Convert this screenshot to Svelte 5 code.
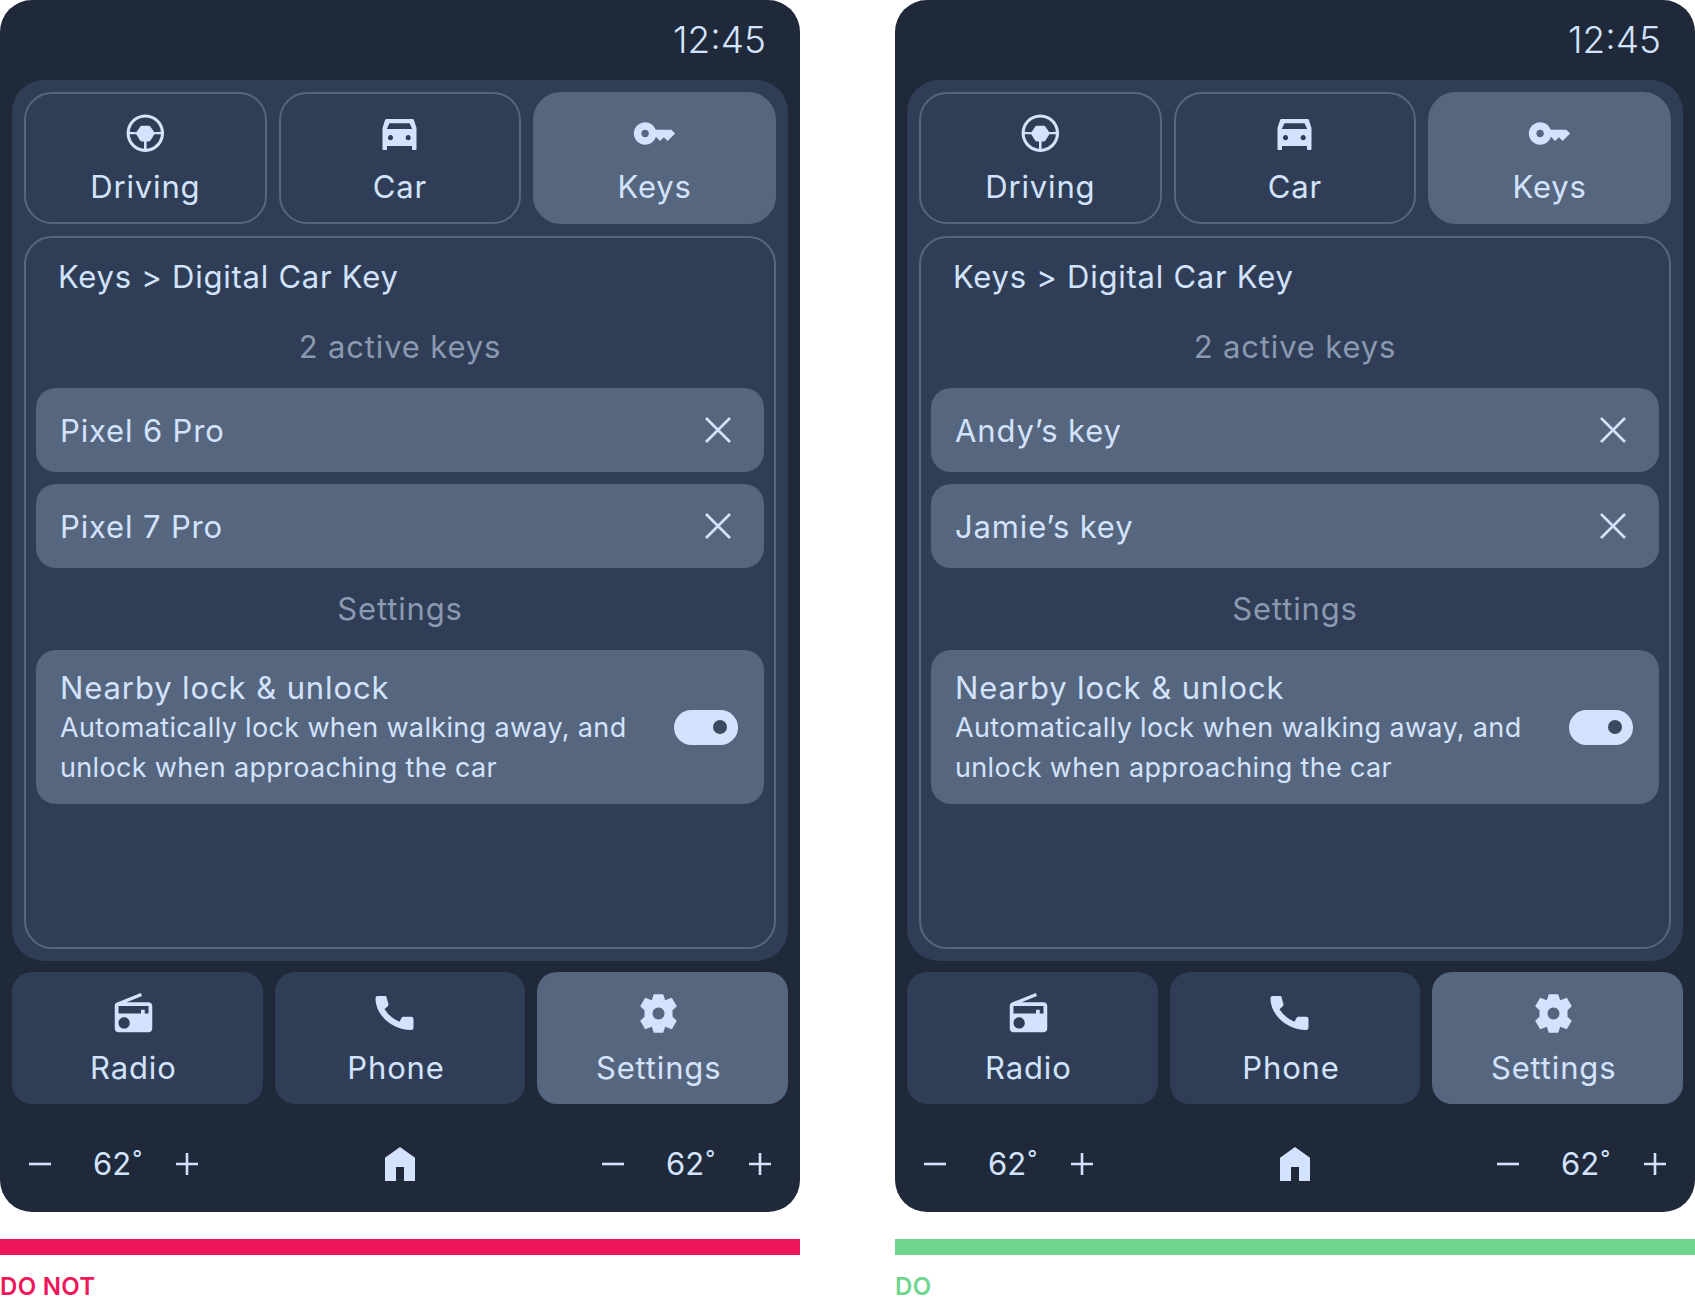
<script>
  const icons = {
    car: ['M9.5 8H35.5Q36.6 8 37 9.2L39.5 17V38Q39.5 39 38.5 39H36Q35 39 35 38V35H10V38Q10 39 9 39H6.5Q5.5 39 5.5 38V17L8 9.2Q8.4 8 9.5 8ZM12.5 12.3 9.8 18H35.2L32.5 12.3ZM13.5 24.1a2.6 2.6 0 1 0 .01 0ZM31.2 24.1a2.6 2.6 0 1 0 .01 0Z'],
    key: ['M7 14c-1.1 0-2-.9-2-2s.9-2 2-2 2 .9 2 2-.9 2-2 2zm5.65-4C11.83 7.67 9.61 6 7 6c-3.31 0-6 2.69-6 6s2.69 6 6 6c2.61 0 4.83-1.67 5.65-4H13l2 2 2-2 2 2 4-4.04L21 10h-8.35z'],
    wheel: [
      'M22.3 3.5a18.7 18.7 0 1 0 .01 0ZM22.3 6.5a15.7 15.7 0 1 1-.01 0Z',
      'M5 20.7 14.5 21.2V23.2L5 23.2ZM39.6 20.7 30.1 21.2V23.2L39.6 23.2ZM21 28H23.6V39.5H21Z',
      'M18.8 14.8H25.8Q26.8 14.8 27.5 15.7L31.4 21.5Q32 22.3 31.4 23.2L27.5 29.4Q26.8 30.4 25.8 30.4H18.8Q17.8 30.4 17.1 29.4L13.2 23.2Q12.6 22.3 13.2 21.5L17.1 15.7Q17.8 14.8 18.8 14.8Z'
    ],
    radio: ['M3.24 6.15C2.51 6.43 2 7.17 2 8v12c0 1.1.89 2 2 2h16c1.11 0 2-.9 2-2V8c0-1.11-.89-2-2-2H8.3l8.26-3.34L15.88 1 3.24 6.15zM7 20c-1.66 0-3-1.34-3-3s1.34-3 3-3 3 1.34 3 3-1.34 3-3 3zm13-8h-2v-2h-2v2H4V8h16v4z'],
    phone: ['M4.8 5H12.5Q13.3 5 13.5 6L15.5 13.5Q15.6 14.3 15 15L11.5 18.3Q17 27 26.5 30.7L28.8 26.5Q29.2 25.7 30 25.7H38.2Q40.5 25.7 40.5 28V36.7Q40.5 39 38 39C19 39 2.5 24 2.5 7.3Q2.5 5 4.8 5Z'],
    settings: ['M17.8 3.2H27.2L29.2 9.2 35.8 6.8 40.8 15.2 36.5 19.2V25.8L40.8 29.8 35.8 38.2 29.2 35.8 27.2 41.8H17.8L15.8 35.8 9.2 38.2 4.2 29.8 8.5 25.8V19.2L4.2 15.2 9.2 6.8 15.8 9.2ZM22.5 16.5a6 6 0 1 0 .01 0Z']
  };
  const tabs = [
    { label: 'Driving', icon: 'wheel', box: '0 0 45 45' },
    { label: 'Car', icon: 'car', box: '0 0 45 45' },
    { label: 'Keys', icon: 'key', box: '0 0 24 24', active: true }
  ];
  const apps = [
    { label: 'Radio', icon: 'radio', box: '0 0 24 24' },
    { label: 'Phone', icon: 'phone', box: '0 0 45 45' },
    { label: 'Settings', icon: 'settings', box: '0 0 45 45', active: true }
  ];
  const variants = [
    { keys: ['Pixel 6 Pro', 'Pixel 7 Pro'], caption: 'DO NOT', kind: 'bad' },
    { keys: ['Andy’s key', 'Jamie’s key'], caption: 'DO', kind: 'good' }
  ];
</script>

{#snippet icon(item)}
  <svg class="icon" viewBox={item.box} aria-hidden="true">
    {#each icons[item.icon] as d}<path {d} fill-rule="evenodd" />{/each}
  </svg>
{/snippet}

{#snippet climate()}
  <div class="climate">
    <svg class="sign" viewBox="0 0 22 22" aria-hidden="true"><path d="M0 11H22" /></svg>
    <span class="temp">62<sup>°</sup></span>
    <svg class="sign" viewBox="0 0 22 22" aria-hidden="true"><path d="M0 11H22M11 0V22" /></svg>
  </div>
{/snippet}

<div class="page">
  {#each variants as v}
    <section class="column">
      <div class="phone">
        <header class="status">12:45</header>
        <div class="panel">
          <nav class="tabs">
            {#each tabs as t}
              <div class="tile tab" class:active={t.active}>
                {@render icon(t)}
                <span>{t.label}</span>
              </div>
            {/each}
          </nav>
          <div class="card">
            <h1>Keys &gt; Digital Car Key</h1>
            <h2 class="first">2 active keys</h2>
            <div class="rows">
              {#each v.keys as k}
                <div class="row">
                  <span>{k}</span>
                  <svg class="close" viewBox="0 0 28 28" aria-hidden="true"><path d="M2 2 26 26M26 2 2 26" /></svg>
                </div>
              {/each}
            </div>
            <h2 class="second">Settings</h2>
            <div class="row setting">
              <div class="copy">
                <strong>Nearby lock &amp; unlock</strong>
                <p>Automatically lock when walking away, and unlock when approaching the car</p>
              </div>
              <div class="toggle"><i></i></div>
            </div>
          </div>
        </div>
        <nav class="apps">
          {#each apps as a}
            <div class="tile app" class:active={a.active}>
              {@render icon(a)}
              <span>{a.label}</span>
            </div>
          {/each}
        </nav>
        <footer class="bottom">
          {@render climate()}
          <svg class="home" viewBox="0 0 30 34" aria-hidden="true"><path d="M15 0 30 10.7V34H19V20H11V34H0V10.7Z" /></svg>
          {@render climate()}
        </footer>
      </div>
      <div class="bar {v.kind}"></div>
      <div class="caption {v.kind}">{v.caption}</div>
    </section>
  {/each}
</div>

<style>
  :global(body) { margin: 0; background: #fff; }
  .page {
    width: 1695px;
    height: 1301px;
    display: flex;
    justify-content: space-between;
    font-family: Inter, Roboto, sans-serif;
    color: #d3e3fd;
    overflow: hidden;
  }
  .column { width: 800px; }
  .phone {
    height: 1212px;
    background: #1f2939;
    border-radius: 32px;
    display: flex;
    flex-direction: column;
    padding: 0 12px;
    box-sizing: border-box;
  }
  .status {
    height: 80px;
    flex: none;
    text-align: right;
    font-size: 37px;
    line-height: 80px;
    padding-right: 22px;
    font-weight: 300;
  }
  .panel {
    height: 881px;
    flex: none;
    box-sizing: border-box;
    background: #2f3e56;
    border-radius: 32px;
    padding: 12px;
    display: flex;
    flex-direction: column;
    gap: 12px;
  }
  .tabs { display: grid; grid-template-columns: repeat(3, 1fr); gap: 12px; }
  .tile {
    height: 132px;
    box-sizing: border-box;
    display: flex;
    flex-direction: column;
    align-items: center;
    font-size: 31px;
    line-height: 40px;
    letter-spacing: 0.85px;
  }
  .tab { border: 2px solid #56667f; border-radius: 28px; padding-top: 17px; }
  .tab.active { background: #56667f; }
  .tab span { margin-top: 11px; }
  .app span { margin-top: 12px; }
  .icon { width: 45px; height: 45px; fill: #d3e3fd; display: block; }
  .card {
    flex: 1;
    border: 2px solid #56667f;
    border-radius: 28px;
    padding: 10px;
    display: flex;
    flex-direction: column;
  }
  h1 {
    margin: 9px 0 0;
    padding-left: 22px;
    font-size: 31px;
    font-weight: 400;
    line-height: 40px;
    letter-spacing: 0.75px;
  }
  h2 {
    margin: 0;
    font-size: 31px;
    font-weight: 400;
    line-height: 40px;
    letter-spacing: 0.85px;
    text-align: center;
    color: #8a99b0;
  }
  h2.first { margin-top: 30px; margin-bottom: 21px; }
  h2.second { margin-top: 21px; margin-bottom: 21px; }
  .rows { display: flex; flex-direction: column; gap: 12px; }
  .row {
    height: 84px;
    background: #56667f;
    border-radius: 20px;
    display: flex;
    align-items: center;
    justify-content: space-between;
    padding: 0 32px 0 24px;
    font-size: 31px;
    letter-spacing: 0.85px;
  }
  .close { width: 28px; height: 28px; fill: none; stroke: #d3e3fd; stroke-width: 2.6; }
  .setting { height: 154px; padding-right: 26px; }
  .copy { width: 590px; }
  .copy strong { display: block; margin-top: 2px; font-weight: 400; font-size: 31px; line-height: 40px; letter-spacing: 0.9px; }
  .copy p { margin: 0; font-size: 27px; line-height: 40px; letter-spacing: 0.34px; }
  .toggle {
    width: 64px;
    height: 35px;
    border-radius: 18px;
    background: #d3e3fd;
    position: relative;
  }
  .toggle i {
    position: absolute;
    right: 11px;
    top: 10px;
    width: 14px;
    height: 14px;
    border-radius: 50%;
    background: #3c4a60;
  }
  .apps { display: grid; grid-template-columns: repeat(3, 1fr); gap: 12px; margin-top: 11px; }
  .app { background: #2f3e56; border-radius: 20px; padding: 19px 8px 0 0; }
  .app.active { background: #56667f; }
  .bottom {
    flex: 1;
    display: flex;
    align-items: center;
    justify-content: space-between;
    padding: 12px 17px 0;
  }
  .climate { display: flex; align-items: center; }
  .sign { width: 22px; height: 22px; fill: none; stroke: #d3e3fd; stroke-width: 2.6; display: block; }
  .temp {
    width: 47px;
    margin: 0 36px 0 42px;
    font-size: 31px;
    line-height: 40px;
    white-space: nowrap;
  }
  .temp sup { font-size: 22px; line-height: 0; vertical-align: 9px; margin-left: 1px; }
  .home { width: 30px; height: 34px; fill: #d3e3fd; display: block; }
  .bar { height: 16px; margin-top: 27px; }
  .bar.bad { background: #ee1558; }
  .bar.good { background: #6fd68f; }
  .caption { font-size: 24px; font-weight: 600; margin-top: 17px; line-height: 30px; letter-spacing: 0.3px; }
  .caption.bad { color: #ee1558; }
  .caption.good { color: #6fd68f; }
</style>
